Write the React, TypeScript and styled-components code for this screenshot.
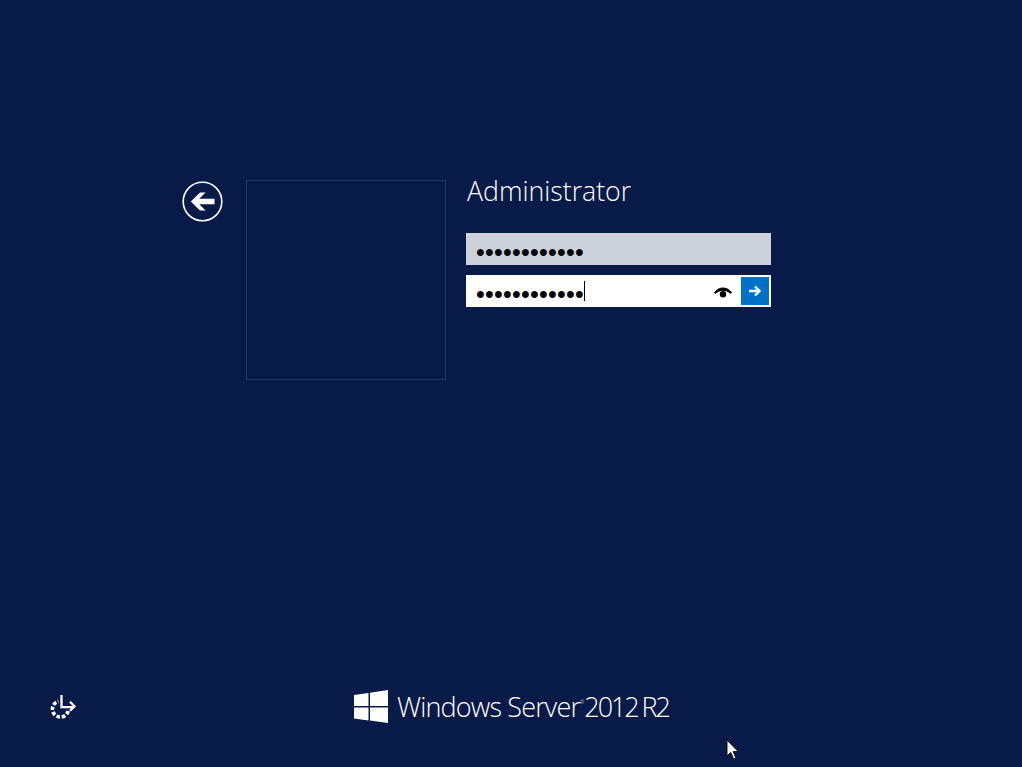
import React from "react";
import styled, { createGlobalStyle } from "styled-components";

const Global = createGlobalStyle`
  html, body { margin: 0; padding: 0; height: 100%; background: #081a47; overflow: hidden; }
  #root { height: 100%; }
`;

const Screen = styled.main`
  position: relative;
  width: 1022px;
  height: 767px;
  box-sizing: border-box;
  display: flex;
  flex-direction: column;
  justify-content: space-between;
  background: #081a47;
  font-family: "Open Sans", "Liberation Sans", sans-serif;
  color: #fff;
`;

const LoginRow = styled.section`
  display: flex;
  align-items: flex-start;
  padding: 180px 0 0 182px;
`;

const BackButton = styled.button`
  width: 41px;
  height: 41px;
  margin: 1px 23px 0 0;
  padding: 0;
  border: 0;
  background: none;
  display: block;
  flex: none;
`;

const Avatar = styled.div`
  width: 200px;
  height: 200px;
  box-sizing: border-box;
  border: 1px solid #28355f;
  flex: none;
  margin-right: 20px;
`;

const Credentials = styled.form`
  width: 305px;
  display: flex;
  flex-direction: column;
`;

const UserName = styled.h1`
  margin: 0 0 19px 1px;
  height: 34px;
  line-height: 21px;
  font-size: 26.7px;
  font-weight: 300;
  color: #fff;
`;

const Field = styled.div<{ $active?: boolean }>`
  height: 32px;
  box-sizing: border-box;
  margin-bottom: 10px;
  padding: 0 2px 0 10px;
  display: flex;
  align-items: center;
  background: ${(p) => (p.$active ? "#ffffff" : "#cdd1da")};
`;

const Dots = styled.span`
  font-family: "Liberation Sans", sans-serif;
  font-size: 25px;
  line-height: 32px;
  letter-spacing: 0.25px;
  margin-top: 5px;
  color: #000;
  white-space: nowrap;
`;

const Caret = styled.span`
  width: 1px;
  height: 20px;
  background: #000;
  flex: none;
`;

const Eye = styled.svg`
  margin-left: auto;
  margin-right: 9px;
  margin-top: 4px;
  flex: none;
`;

const Submit = styled.button`
  width: 28px;
  height: 28px;
  padding: 0;
  border: 0;
  background: #0072c6;
  display: flex;
  align-items: center;
  justify-content: center;
  flex: none;
`;

const Footer = styled.footer`
  display: flex;
  align-items: center;
  padding: 0 0 43px 50px;
`;

const EaseOfAccess = styled.svg`
  flex: none;
  margin-right: 278px;
`;

const Brand = styled.div`
  display: flex;
  align-items: center;
`;

const BrandLogo = styled.svg`
  flex: none;
  margin-right: 9px;
`;

const BrandName = styled.span`
  font-size: 27px;
  font-weight: 300;
  line-height: 34px;
  letter-spacing: -0.85px;
  white-space: nowrap;
  color: #fff;
`;

const Reg = styled.span`
  font-size: 5px;
  line-height: 0;
  vertical-align: 13px;
  margin: 0 1px 0 0;
`;

const Version = styled.span`
  letter-spacing: -2.1px;
  word-spacing: -1px;
`;

const Pointer = styled.svg`
  position: absolute;
  left: 726px;
  top: 739px;
`;

export default function App() {
  return (
    <Screen>
      <Global />
      <LoginRow>
        <BackButton type="button" aria-label="Back">
          <svg width="41" height="41" viewBox="0 0 41 41">
            <circle cx="20.5" cy="20.5" r="19.3" fill="none" stroke="#fff" strokeWidth="1.6" />
            <path d="M8.800 20.500 18 11.500h5.600l-6.400 6.200h15.300v5.600H17.200l6.400 6.200H18z" fill="#fff" />
          </svg>
        </BackButton>
        <Avatar />
        <Credentials>
          <UserName>Administrator</UserName>
          <Field>
            <Dots>••••••••••••</Dots>
          </Field>
          <Field $active>
            <Dots>••••••••••••</Dots>
            <Caret />
            <Eye width="18" height="12" viewBox="0 0 18 12">
              <path d="M0.500 5.500C3 2.200 6 1 9 1s6 1.200 8.500 4.500l-1 .8C14 4.200 11.500 3.300 9 3.300S4 4.200 1.500 6.300z" fill="#000" stroke="#000" strokeWidth="1" />
              <circle cx="9" cy="7.300" r="3.200" fill="#000" />
            </Eye>
            <Submit type="button" aria-label="Submit">
              <svg width="14" height="12" viewBox="0 0 14 12">
                <path d="M1 6h10.500M7 1.500 11.500 6 7 10.500" fill="none" stroke="#fff" strokeWidth="2.400" />
              </svg>
            </Submit>
          </Field>
        </Credentials>
      </LoginRow>
      <Footer>
        <EaseOfAccess width="26" height="24" viewBox="0 0 26 24">
          <path d="M18.200 16A8 8 0 1 1 8.400 6.300" fill="none" stroke="#fff" strokeWidth="3.600" strokeDasharray="3.600 1.800" />
          <path d="M11.500 0v12.200H23" fill="none" stroke="#fff" strokeWidth="2.300" />
          <path d="M20 6.800 24.500 11.300 20 15.800" fill="none" stroke="#fff" strokeWidth="2.300" />
        </EaseOfAccess>
        <Brand>
          <BrandLogo width="34" height="34" viewBox="0 0 34 34">
            <path d="M0 5 14.500 3v13H0zM16 2.800 34 0v16H16zM0 17.500h14.500v13L0 28.500zM16 17.500h18V33l-18-2.500z" fill="#fff" />
          </BrandLogo>
          <BrandName>
            Windows Server<Reg>®</Reg>
            <Version>2012 R2</Version>
          </BrandName>
        </Brand>
      </Footer>
      <Pointer width="13" height="22" viewBox="0 0 13 22">
        <path d="M1 1v16l3.800-3.600 2.800 6.800 2.400-1-2.800-6.600h5z" fill="#fff" stroke="#111" strokeWidth="1" />
      </Pointer>
    </Screen>
  );
}
